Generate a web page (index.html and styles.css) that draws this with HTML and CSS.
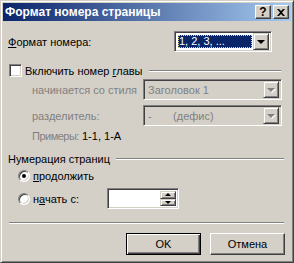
FILE: index.html
```html
<!DOCTYPE html>
<html lang="ru">
<head>
    <meta charset="UTF-8">
    <title>Формат номера страницы</title>
    <link rel="stylesheet" href="styles.css">
</head>
<body>
    <div class="window">
        <div class="titlebar">
            <span class="title">Формат номера страницы</span>
            <div class="caption_btns">
                <div class="caption_btn help">?</div>
                <div class="caption_btn close">
                    <svg width="8" height="7" viewBox="0 0 8 7"><path d="M0 0h2l2 2 2-2h2L5 3.5 8 7H6L4 5 2 7H0l3-3.5z" fill="#000"/></svg>
                </div>
            </div>
        </div>

        <div class="client">
            <div class="row row_format">
                <span class="label"><u>Ф</u>ормат номера:</span>
                <div class="combo combo_format">
                    <div class="combo_value selected"><span>1, 2, 3, ...</span></div>
                    <div class="drop_btn"><i class="arrow"></i></div>
                </div>
            </div>

            <div class="row row_group">
                <span class="checkbox"></span>
                <span class="check_label">Включить номер <u>г</u>лавы</span>
                <span class="group_line"></span>
            </div>

            <div class="row row_field first_field">
                <span class="label disabled">начинается со стиля</span>
                <div class="combo combo_wide off">
                    <div class="combo_value">Заголовок 1</div>
                    <div class="drop_btn"><i class="arrow"></i></div>
                </div>
            </div>

            <div class="row row_field">
                <span class="label disabled">разделитель:</span>
                <div class="combo combo_wide off">
                    <div class="combo_value">-&nbsp;&nbsp;&nbsp;&nbsp;&nbsp;&nbsp;&nbsp;(дефис)</div>
                    <div class="drop_btn"><i class="arrow"></i></div>
                </div>
            </div>

            <div class="row row_examples">
                <span class="label disabled examples_label">Примеры:</span>
                <span class="label">1-1, 1-А</span>
            </div>

            <div class="row row_group numbering">
                <span class="group_title">Нумерация страниц</span>
                <span class="group_line"></span>
            </div>

            <div class="row row_radio">
                <span class="radio checked"></span>
                <span class="radio_label"><u>п</u>родолжить</span>
            </div>

            <div class="row row_radio row_start">
                <span class="radio"></span>
                <span class="radio_label start_label">н<u>а</u>чать с:</span>
                <div class="spin">
                    <div class="spin_input"></div>
                    <div class="spin_btns">
                        <div class="spin_btn"><i class="arrow up"></i></div>
                        <div class="spin_btn"><i class="arrow"></i></div>
                    </div>
                </div>
            </div>

            <div class="separator"></div>

            <div class="row buttons">
                <div class="button default"><span>OK</span></div>
                <div class="button"><span>Отмена</span></div>
            </div>
        </div>
    </div>
</body>
</html>
```

FILE: styles.css
```css
* {
    margin: 0;
    padding: 0;
    box-sizing: border-box;
}

body {
    background: #d4d0c8;
    font-family: 'Liberation Sans', 'Arial', sans-serif;
    font-size: 11px;
    color: #000;
}

u {
    text-decoration: underline;
    text-underline-offset: 1px;
}

.window {
    width: 294px;
    height: 263px;
    background: #d4d0c8;
    border: 1px solid;
    border-color: #d4d0c8 #404040 #404040 #d4d0c8;
    box-shadow: inset 1px 1px #fff, inset -1px -1px #808080;
    padding: 2px;
    display: flex;
    flex-direction: column;
}

/* title bar */
.titlebar {
    height: 18px;
    background: linear-gradient(to right, #0a246a, #a6caf0);
    display: flex;
    align-items: center;
    padding: 0 2px 0 2px;
}

.title {
    color: #fff;
    font-weight: bold;
    font-size: 12px;
    flex: 1;
    white-space: nowrap;
}

.caption_btns {
    display: flex;
    gap: 2px;
}

.caption_btn {
    width: 16px;
    height: 14px;
    background: #d4d0c8;
    border: 1px solid;
    border-color: #fff #404040 #404040 #fff;
    box-shadow: inset -1px -1px #808080;
    display: flex;
    align-items: center;
    justify-content: center;
    font-weight: bold;
    font-size: 12px;
    line-height: 12px;
}

/* client area */
.client {
    flex: 1;
    padding: 0 6px 0 5px;
    display: flex;
    flex-direction: column;
}

.row {
    display: flex;
    align-items: center;
}

.row_format {
    margin-top: 10px;
    height: 21px;
}

.combo {
    height: 21px;
    display: flex;
    align-items: center;
    background: #fff;
    border: 1px solid;
    border-color: #808080 #fff #fff #808080;
    box-shadow: inset 1px 1px #404040, inset -1px -1px #d4d0c8;
    padding: 2px;
}

.combo_format {
    width: 98px;
    margin-left: auto;
    margin-right: 13px;
}

.combo_value {
    flex: 1;
    height: 100%;
    display: flex;
    align-items: center;
    padding-left: 2px;
    white-space: nowrap;
}

.combo_value.selected {
    padding: 1px;
}

.combo_value.selected span {
    flex: 1;
    height: 100%;
    background: #0a246a;
    color: #fff;
    outline: 1px dotted #e8d878;
    outline-offset: -1px;
    padding-left: 1px;
    line-height: 13px;
}

.drop_btn {
    width: 16px;
    height: 17px;
    background: #d4d0c8;
    border: 1px solid;
    border-color: #d4d0c8 #404040 #404040 #d4d0c8;
    box-shadow: inset 1px 1px #fff, inset -1px -1px #808080;
    display: flex;
    align-items: center;
    justify-content: center;
}

.arrow {
    display: block;
    width: 0;
    height: 0;
    border-left: 4px solid transparent;
    border-right: 4px solid transparent;
    border-top: 4px solid #000;
    margin-top: 1px;
}

.arrow.up {
    border-top: 0;
    border-bottom: 4px solid #000;
    margin-top: 0;
}

.combo.off {
    background: #d4d0c8;
    color: #808080;
}

.combo.off .arrow {
    border-top-color: #808080;
    filter: drop-shadow(1px 1px 0 #fff);
}

/* group headers */
.row_group {
    margin-top: 12px;
    height: 13px;
}

.checkbox {
    width: 13px;
    height: 13px;
    margin-left: 1px;
    background: #fff;
    border: 1px solid;
    border-color: #808080 #fff #fff #808080;
    box-shadow: inset 1px 1px #404040, inset -1px -1px #d4d0c8;
}

.check_label {
    margin-left: 3px;
}

.group_line {
    flex: 1;
    height: 2px;
    border-top: 1px solid #808080;
    border-bottom: 1px solid #fff;
    margin: 1px 4px 0 6px;
}

.disabled {
    color: #808080;
}

.row_field {
    margin-top: 5px;
    height: 21px;
    padding-left: 24px;
}

.first_field {
    margin-top: 2px;
}

.combo_wide {
    width: 139px;
    margin-left: auto;
    margin-right: 3px;
}

.row_examples {
    margin-top: 3px;
    height: 13px;
    padding-left: 24px;
}

.examples_label {
    flex: none;
    width: 50px;
    white-space: nowrap;
    letter-spacing: -0.5px;
}

.numbering {
    margin-top: 10px;
}

.numbering .group_line {
    margin: 0 1px 0 6px;
}

/* radios */
.row_radio {
    margin-top: 4px;
    height: 13px;
    padding-left: 10px;
}

.radio {
    width: 12px;
    height: 12px;
    border-radius: 50%;
    background: #fff;
    border: 1px solid;
    border-color: #808080 #fff #fff #808080;
    box-shadow: inset 1px 1px #404040, inset -1px -1px #d4d0c8;
    display: flex;
    align-items: center;
    justify-content: center;
}

.radio.checked::after {
    content: "";
    width: 4px;
    height: 4px;
    border-radius: 50%;
    background: #000;
}

.radio_label {
    margin-left: 3px;
}

.row_start {
    margin-top: 6px;
    height: 21px;
}

.start_label {
    width: 74px;
}

.spin {
    width: 72px;
    height: 21px;
    display: flex;
    background: #fff;
    border: 1px solid;
    border-color: #808080 #fff #fff #808080;
    box-shadow: inset 1px 1px #404040, inset -1px -1px #d4d0c8;
    padding: 2px;
}

.spin_input {
    flex: 1;
}

.spin_btns {
    width: 16px;
    display: flex;
    flex-direction: column;
}

.spin_btn {
    flex: 1;
    background: #d4d0c8;
    border: 1px solid;
    border-color: #d4d0c8 #404040 #404040 #d4d0c8;
    box-shadow: inset 1px 1px #fff, inset -1px -1px #808080;
    display: flex;
    align-items: center;
    justify-content: center;
}

.spin_btn .arrow {
    border-left-width: 3px;
    border-right-width: 3px;
    border-top-width: 3px;
    margin-top: 0;
}

.spin_btn .arrow.up {
    border-bottom-width: 3px;
}

.separator {
    margin: 13px 1px 0 1px;
    height: 2px;
    border-top: 1px solid #808080;
    border-bottom: 1px solid #fff;
}

/* buttons */
.buttons {
    margin-top: 9px;
    justify-content: flex-end;
    gap: 9px;
}

.button {
    width: 75px;
    height: 22px;
    background: #d4d0c8;
    border: 1px solid;
    border-color: #fff #404040 #404040 #fff;
    box-shadow: inset -1px -1px #808080;
    display: flex;
    align-items: center;
    justify-content: center;
}

.button.default {
    border-color: #000;
    box-shadow: inset 1px 1px #fff, inset -1px -1px #404040, inset -2px -2px #808080;
}
```
